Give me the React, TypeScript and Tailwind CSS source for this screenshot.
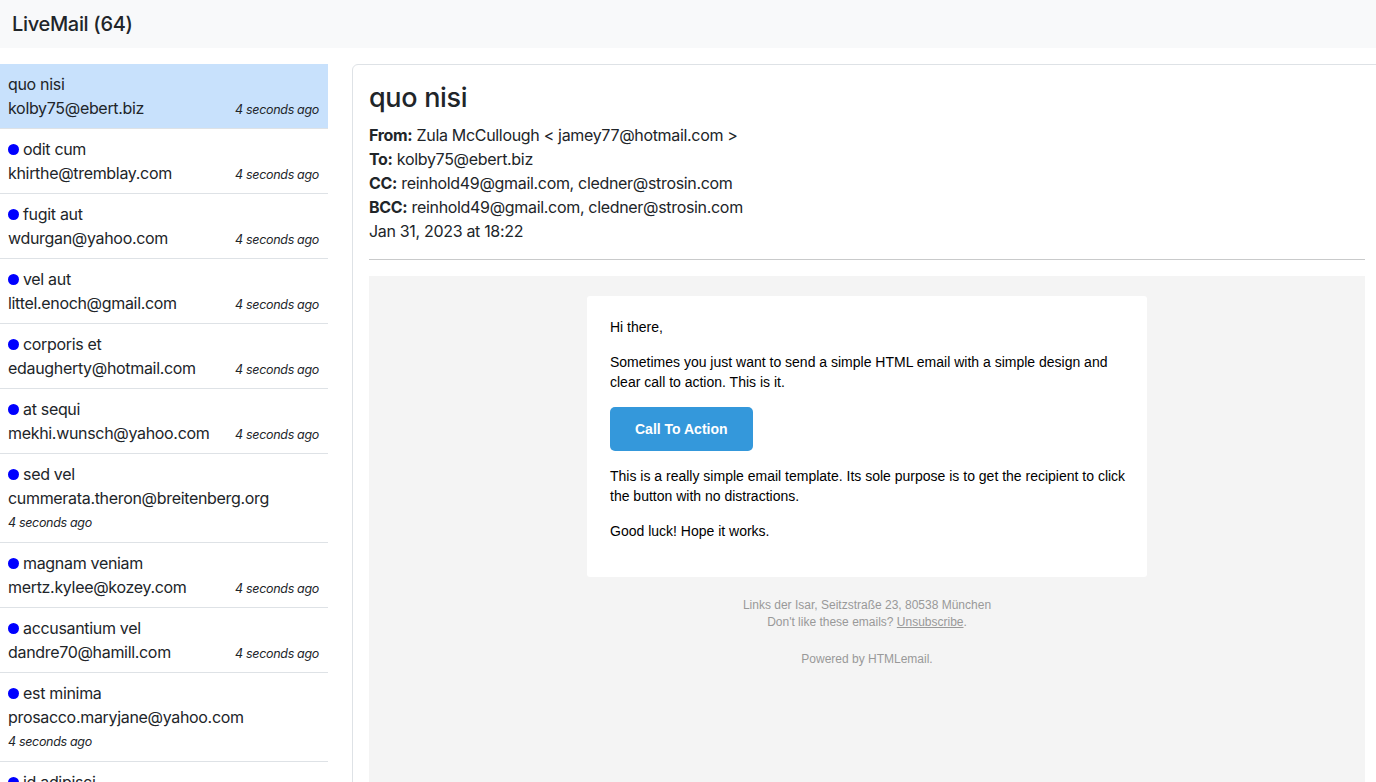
type Mail = {
  subject: string;
  email: string;
  unread: boolean;
  wrap?: boolean;
};

const mails: Mail[] = [
  { subject: "quo nisi", email: "kolby75@ebert.biz", unread: false },
  { subject: "odit cum", email: "khirthe@tremblay.com", unread: true },
  { subject: "fugit aut", email: "wdurgan@yahoo.com", unread: true },
  { subject: "vel aut", email: "littel.enoch@gmail.com", unread: true },
  { subject: "corporis et", email: "edaugherty@hotmail.com", unread: true },
  { subject: "at sequi", email: "mekhi.wunsch@yahoo.com", unread: true },
  { subject: "sed vel", email: "cummerata.theron@breitenberg.org", unread: true, wrap: true },
  { subject: "magnam veniam", email: "mertz.kylee@kozey.com", unread: true },
  { subject: "accusantium vel", email: "dandre70@hamill.com", unread: true },
  { subject: "est minima", email: "prosacco.maryjane@yahoo.com", unread: true, wrap: true },
  { subject: "id adipisci", email: "lemke.ruthie@gmail.com", unread: true },
];

function MailItem({ mail, active }: { mail: Mail; active: boolean }) {
  return (
    <div
      className={
        "px-2 py-2 border-b border-[#dee2e6] leading-6 text-[16px] " +
        (active ? "bg-[#c8e1fc]" : "bg-white")
      }
    >
      <div className="flex items-center h-6">
        {mail.unread && (
          <span className="inline-block w-[11px] h-[11px] rounded-full bg-[#0000ff] mr-1" />
        )}
        <span>{mail.subject}</span>
      </div>
      {mail.wrap ? (
        <>
          <div>{mail.email}</div>
          <div className="text-[12.5px] italic h-6 leading-[25px]">4 seconds ago</div>
        </>
      ) : (
        <div className="flex items-end justify-between h-6">
          <span>{mail.email}</span>
          <span className="text-[12.5px] italic leading-5 pr-px">4 seconds ago</span>
        </div>
      )}
    </div>
  );
}

function EmailBody() {
  return (
    <div
      className="bg-[#f4f4f4] pt-5 h-[600px] text-[14px] text-black tracking-normal"
      style={{ fontFamily: '"Liberation Sans", Arial, Helvetica, sans-serif' }}
    >
      <div className="w-[560px] mx-auto bg-white rounded-[3px] pl-[23px] pr-3 pt-[21px] pb-[21px] leading-5">
        <p className="mb-[15px]">Hi there,</p>
        <p className="mb-[15px] pr-2">
          Sometimes you just want to send a simple HTML email with a simple design and clear call
          to action. This is it.
        </p>
        <div className="mb-[15px]">
          <span className="inline-block bg-[#3498db] text-white font-bold rounded-[5px] px-[25px] py-3">
            Call To Action
          </span>
        </div>
        <p className="mb-[15px]">
          This is a really simple email template. Its sole purpose is to get the recipient to click
          the button with no distractions.
        </p>
        <p className="mb-[15px]">Good luck! Hope it works.</p>
      </div>
      <div className="text-center text-[12px] leading-[17px] text-[#999999] mt-5">
        <p>Links der Isar, Seitzstraße 23, 80538 München</p>
        <p>
          Don't like these emails? <span className="underline">Unsubscribe</span>.
        </p>
        <p className="mt-5">Powered by HTMLemail.</p>
      </div>
    </div>
  );
}

export default function App() {
  return (
    <div
      className="h-screen w-full overflow-hidden bg-white text-[#212529] tracking-[-0.02em]"
      style={{ fontFamily: 'Inter, "Noto Sans", "Liberation Sans", sans-serif' }}
    >
      <header className="h-12 bg-[#f8f9fa] flex items-center px-3">
        <h1 className="text-[20px] font-medium">LiveMail (64)</h1>
      </header>
      <div className="flex gap-6 pt-4">
        <aside className="w-[328px] shrink-0">
          {mails.map((m, i) => (
            <MailItem key={m.email} mail={m} active={i === 0} />
          ))}
        </aside>
        <main className="w-[1030px] shrink-0 border border-[#dee2e6] rounded-tl-md p-4">
          <h2 className="text-[27px] font-medium leading-[1.25] mb-2">quo nisi</h2>
          <div className="text-[16px] leading-6">
            <div>
              <b className="font-bold">From:</b> Zula McCullough &lt; jamey77@hotmail.com &gt;
            </div>
            <div>
              <b className="font-bold">To:</b> kolby75@ebert.biz
            </div>
            <div>
              <b className="font-bold">CC:</b> reinhold49@gmail.com, cledner@strosin.com
            </div>
            <div>
              <b className="font-bold">BCC:</b> reinhold49@gmail.com, cledner@strosin.com
            </div>
            <div>Jan 31, 2023 at 18:22</div>
          </div>
          <div className="h-px bg-[#c9cacb] my-4" />
          <EmailBody />
        </main>
      </div>
    </div>
  );
}
